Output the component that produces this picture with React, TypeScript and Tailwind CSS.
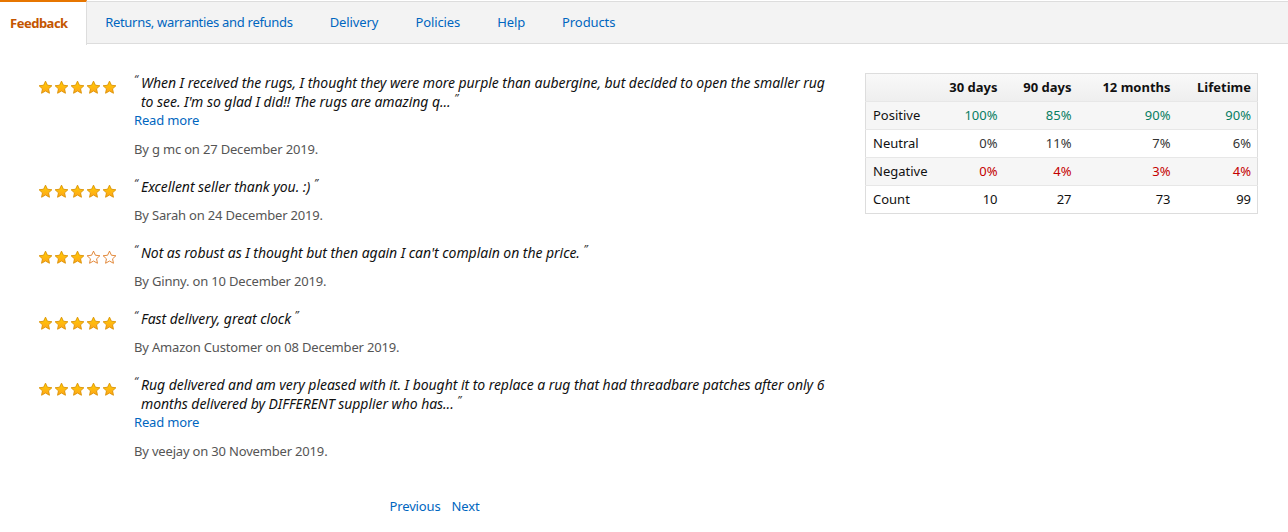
import React from "react";

const FONT = { fontFamily: '"Noto Sans", "Open Sans", Arial, sans-serif' };

function Star({ filled }: { filled: boolean }) {
  return (
    <svg width="15" height="15" viewBox="0 0 24 24" className="block">
      <defs>
        <linearGradient id="sg" x1="0" y1="0" x2="0" y2="1">
          <stop offset="0" stopColor="#ffce00" />
          <stop offset="1" stopColor="#ffa41c" />
        </linearGradient>
      </defs>
      <path
        d="M12 1.8l3.05 6.55 7.15.85-5.3 4.9 1.4 7.1L12 17.6l-6.3 3.6 1.4-7.1-5.3-4.9 7.15-.85L12 1.8z"
        fill={filled ? "url(#sg)" : "#ffffff"}
        stroke={filled ? "#d99000" : "#de7921"}
        strokeWidth="1.4"
        strokeLinejoin="round"
      />
    </svg>
  );
}

function Stars({ n }: { n: number }) {
  return (
    <div className="flex gap-[1px]">
      {[0, 1, 2, 3, 4].map((i) => (
        <Star key={i} filled={i < n} />
      ))}
    </div>
  );
}

type Review = { stars: number; text: string; more: boolean; by: string; date: string };

const reviews: Review[] = [
  {
    stars: 5,
    text: "When I received the rugs, I thought they were more purple than aubergine, but decided to open the smaller rug to see. I'm so glad I did!! The rugs are amazing q...",
    more: true,
    by: "g mc",
    date: "27 December 2019",
  },
  { stars: 5, text: "Excellent seller thank you. :)", more: false, by: "Sarah", date: "24 December 2019" },
  {
    stars: 3,
    text: "Not as robust as I thought but then again I can't complain on the price.",
    more: false,
    by: "Ginny.",
    date: "10 December 2019",
  },
  { stars: 5, text: "Fast delivery, great clock", more: false, by: "Amazon Customer", date: "08 December 2019" },
  {
    stars: 5,
    text: "Rug delivered and am very pleased with it. I bought it to replace a rug that had threadbare patches after only 6 months delivered by DIFFERENT supplier who has...",
    more: true,
    by: "veejay",
    date: "30 November 2019",
  },
];

const tabs: { t: string; cls: string }[] = [
  { t: "Returns, warranties and refunds", cls: "tracking-[-0.3px]" },
  { t: "Delivery", cls: "tracking-[-0.1px]" },
  { t: "Policies", cls: "tracking-[-0.1px]" },
  { t: "Help", cls: "tracking-[-0.1px]" },
  { t: "Products", cls: "tracking-[-0.1px]" },
];

type Cell = { v: string; c: string };
const rows: { label: string; cells: Cell[]; bg: string }[] = [
  {
    label: "Positive",
    bg: "bg-[#f6f6f6]",
    cells: [
      { v: "100%", c: "text-[#067d62]" },
      { v: "85%", c: "text-[#067d62]" },
      { v: "90%", c: "text-[#067d62]" },
      { v: "90%", c: "text-[#067d62]" },
    ],
  },
  {
    label: "Neutral",
    bg: "bg-white",
    cells: [
      { v: "0%", c: "text-[#333]" },
      { v: "11%", c: "text-[#333]" },
      { v: "7%", c: "text-[#333]" },
      { v: "6%", c: "text-[#333]" },
    ],
  },
  {
    label: "Negative",
    bg: "bg-[#f6f6f6]",
    cells: [
      { v: "0%", c: "text-[#c40000]" },
      { v: "4%", c: "text-[#c40000]" },
      { v: "3%", c: "text-[#c40000]" },
      { v: "4%", c: "text-[#c40000]" },
    ],
  },
  {
    label: "Count",
    bg: "bg-white",
    cells: [
      { v: "10", c: "text-[#111]" },
      { v: "27", c: "text-[#111]" },
      { v: "73", c: "text-[#111]" },
      { v: "99", c: "text-[#111]" },
    ],
  },
];

export default function App() {
  return (
    <div style={FONT} className="w-full min-h-[532px] bg-white text-[13px] text-[#111]">
      <nav className="flex h-[44px] items-stretch">
        <div className="h-[45px] bg-white border-t-[2px] border-t-[#e77600] border-r border-r-[#dddddd] pl-[10px] pr-[18px] flex items-center font-bold text-[#c45500] text-[13px] tracking-[-0.5px] pt-[1px]">
          Feedback
        </div>
        <div className="flex-1 flex items-center bg-[#f3f3f3] border-t border-b border-[#dddddd] mt-[1px] pt-[1px]">
          {tabs.map((t) => (
            <span key={t.t} className={`px-[18.5px] text-[#0066c0] text-[13px] ${t.cls}`}>
              {t.t}
            </span>
          ))}
        </div>
      </nav>

      <main className="flex pl-[38px] pr-[30px] pt-[29px]">
        <div className="w-[793px] flex flex-col">
          {reviews.map((r, i) => (
            <div key={i} className="flex mb-[18px]">
              <div className="w-[96px] shrink-0 pt-[7px]">
                <Stars n={r.stars} />
              </div>
              <div className="w-[697px]">
                <div className="pl-[7px] [text-indent:-7px] italic text-[14px] leading-[19px] text-[#111] tracking-[-0.05px]">
                  <span className="inline-block w-[7px] [text-indent:0] text-[11px] text-[#333] align-top leading-[11px]">
                    “
                  </span>
                  {r.text}{" "}
                  <span className="text-[11px] text-[#333] align-top leading-[11px]">”</span>
                </div>
                {r.more && (
                  <div className="text-[13px] leading-[19px] text-[#0066c0] tracking-[-0.15px]">Read more</div>
                )}
                <div className="mt-[10px] text-[13px] leading-[19px] text-[#555] tracking-[-0.18px]">
                  By {r.by} on {r.date}.
                </div>
              </div>
            </div>
          ))}
          <div className="mt-[18px] flex justify-center gap-[11px] text-[13px] leading-[19px] text-[#0066c0] tracking-[-0.15px]">
            <span>Previous</span>
            <span>Next</span>
          </div>
        </div>

        <div className="ml-auto">
          <table className="w-[392px] border-collapse border border-[#dddddd] text-[13px] table-fixed">
            <colgroup>
              <col className="w-[70px]" />
              <col className="w-[68px]" />
              <col className="w-[74px]" />
              <col className="w-[99px]" />
              <col className="w-[81px]" />
            </colgroup>
            <thead>
              <tr className="h-[28px] bg-gradient-to-b from-[#f9f9f9] to-[#eeeeee]">
                <th className="px-[6px]"></th>
                <th className="px-[6px] text-right font-bold">30 days</th>
                <th className="px-[6px] text-right font-bold">90 days</th>
                <th className="px-[6px] text-right font-bold">12 months</th>
                <th className="px-[6px] text-right font-bold">Lifetime</th>
              </tr>
            </thead>
            <tbody>
              {rows.map((row) => (
                <tr key={row.label} className={`h-[28px] border-t border-[#e7e7e7] ${row.bg}`}>
                  <td className="pl-[7px] text-[#111] whitespace-nowrap">{row.label}</td>
                  {row.cells.map((c, j) => (
                    <td key={j} className={`px-[6px] text-right ${c.c}`}>
                      {c.v}
                    </td>
                  ))}
                </tr>
              ))}
            </tbody>
          </table>
        </div>
      </main>
    </div>
  );
}
